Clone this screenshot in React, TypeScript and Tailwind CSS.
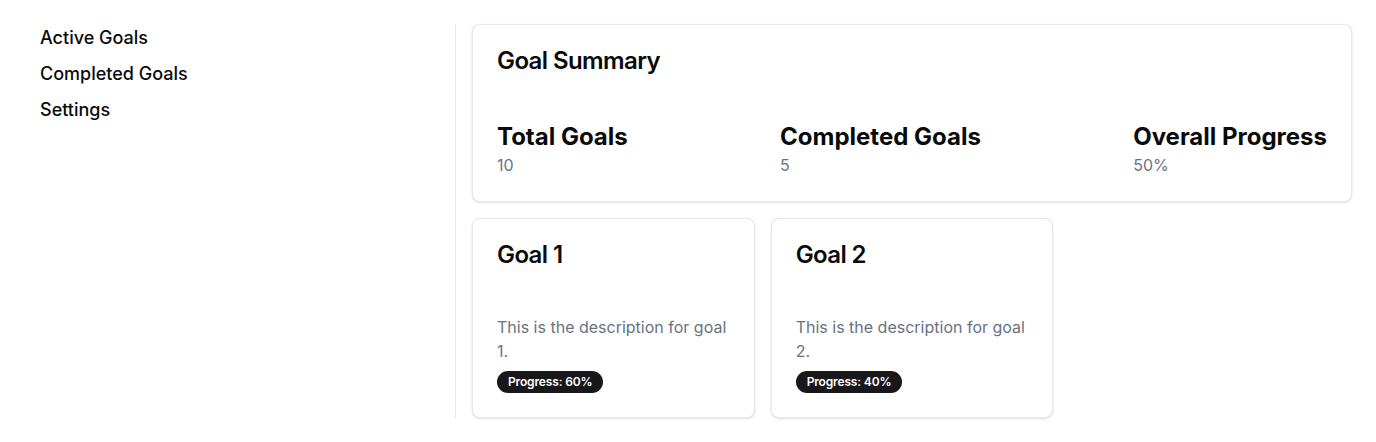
import React from 'react';

const goals = [
  { id: 1, title: 'Goal 1', description: 'This is the description for goal 1.', progress: 60 },
  { id: 2, title: 'Goal 2', description: 'This is the description for goal 2.', progress: 40 },
];

const stats = [
  { label: 'Total Goals', value: '10' },
  { label: 'Completed Goals', value: '5' },
  { label: 'Overall Progress', value: '50%' },
];

export default function App() {
  return (
    <div className="min-h-screen bg-white text-[#0a0a0a] font-['Inter',sans-serif]">
      <div className="grid grid-cols-3 gap-4 p-6">
        {/* Sidebar */}
        <aside className="col-span-1 border-r border-gray-200 pl-4">
          <nav className="flex flex-col gap-2">
            <a href="#" className="text-lg leading-7 font-medium">Active Goals</a>
            <a href="#" className="text-lg leading-7 font-medium">Completed Goals</a>
            <a href="#" className="text-lg leading-7 font-medium">Settings</a>
          </nav>
        </aside>

        {/* Main content */}
        <main className="col-span-2 flex flex-col gap-4">
          <div className="rounded-lg border border-gray-200 bg-white shadow-sm">
            <div className="px-6 pt-6 pb-12">
              <h2 className="text-2xl leading-none font-semibold tracking-tight">Goal Summary</h2>
            </div>
            <div className="px-6 pb-6 flex justify-between">
              {stats.map((s) => (
                <div key={s.label}>
                  <h3 className="text-2xl leading-8 font-bold">{s.label}</h3>
                  <p className="text-base leading-6 text-gray-500">{s.value}</p>
                </div>
              ))}
            </div>
          </div>

          <div className="grid grid-cols-3 gap-4">
            {goals.map((g) => (
              <div key={g.id} className="rounded-lg border border-gray-200 bg-white shadow-sm">
                <div className="px-6 pt-6 pb-12">
                  <h3 className="text-2xl leading-none font-semibold tracking-tight">{g.title}</h3>
                </div>
                <div className="px-6 pb-6">
                  <p className="text-base leading-6 text-gray-500">{g.description}</p>
                  <span className="mt-2 inline-flex items-center rounded-full border border-transparent bg-[#18181b] px-2.5 py-0.5 text-xs leading-4 font-semibold tracking-[-0.0125em] text-white">
                    Progress: {g.progress}%
                  </span>
                </div>
              </div>
            ))}
          </div>
        </main>
      </div>
    </div>
  );
}
